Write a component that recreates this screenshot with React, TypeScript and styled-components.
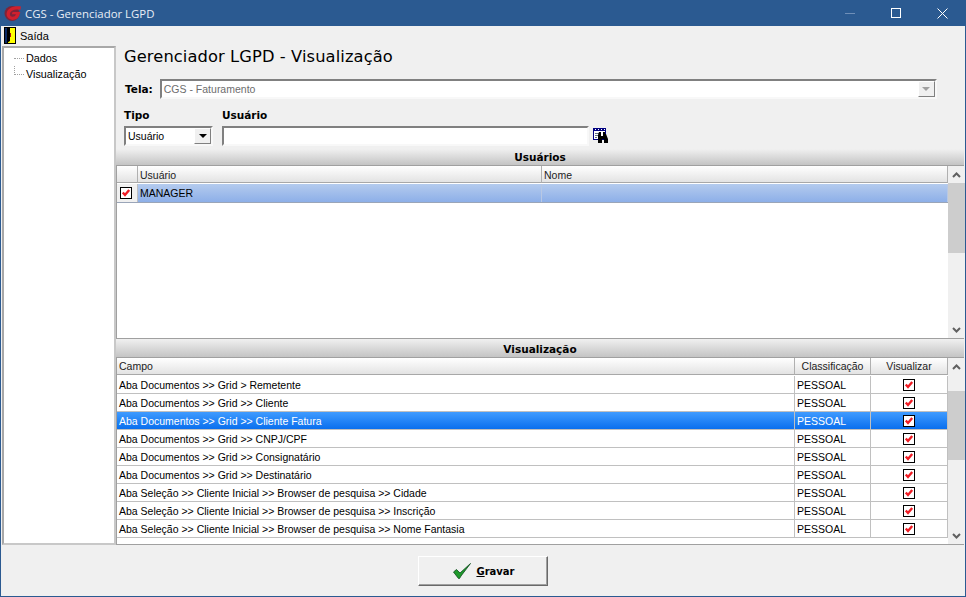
import React, {FC} from "react";
import styled, {createGlobalStyle} from "styled-components";

const GlobalStyle = createGlobalStyle`
  html, body {
    margin: 0;
    padding: 0;
    background: #f0f0f0;
  }
  * {
    box-sizing: border-box;
  }
`;

const Win = styled.div`
  width: 966px;
  height: 597px;
  display: flex;
  flex-direction: column;
  background: #f0f0f0;
  border-left: 1px solid #2b5a91;
  border-right: 1px solid #2b5a91;
  border-bottom: 1px solid #2b5a91;
  font-family: "DejaVu Sans", "Liberation Sans", sans-serif;
  font-size: 10px;
  color: #000;
  overflow: hidden;
`;

const TitleBar = styled.div`
  height: 26px;
  flex: none;
  background: #2b5a91;
  display: flex;
  align-items: center;
  padding-left: 3px;
  color: #e8eef6;
  font-family: "Open Sans", "Liberation Sans", sans-serif;
  font-size: 11.4px;
`;

const TitleText = styled.span`
  margin-left: 3px;
  flex: 1;
`;

const WinButton = styled.div`
  width: 46px;
  height: 26px;
  display: flex;
  align-items: center;
  justify-content: center;
`;

const MenuBar = styled.div`
  height: 19px;
  flex: none;
  display: flex;
  align-items: center;
  padding-left: 3px;
  gap: 4px;
  font-family: "Liberation Sans", sans-serif;
  font-size: 11px;
`;

const Body = styled.div`
  flex: 1;
  display: flex;
  min-height: 0;
  padding: 1px 1px 0 1px;
`;

const Tree = styled.div`
  width: 114px;
  flex: none;
  height: 499px;
  background: #fff;
  border: 2px solid;
  border-color: #a8a8a8 #c8c8c8 #c8c8c8 #a8a8a8;
  padding-top: 2px;
`;

const TreeItem = styled.div`
  height: 16px;
  display: flex;
  align-items: center;
  padding-left: 10px;
  font-family: "Liberation Sans", sans-serif;
  font-size: 10.8px;
`;

const TreeLine = styled.span<{$tall?: boolean}>`
  width: 10px;
  height: ${(p) => (p.$tall ? 9 : 1)}px;
  margin-top: ${(p) => (p.$tall ? -8 : 0)}px;
  margin-right: 2px;
  border-left: 1px dotted #a0a0a0;
  border-bottom: 1px dotted #a0a0a0;
`;

const Main = styled.div`
  flex: 1;
  min-width: 0;
  display: flex;
  flex-direction: column;
`;

const Heading = styled.div`
  height: 33px;
  padding: 1px 0 0 8px;
  font-family: "DejaVu Sans", sans-serif;
  font-size: 16.3px;
  line-height: 20px;
  letter-spacing: 0.1px;
`;

const TelaRow = styled.div`
  height: 20px;
  display: flex;
  align-items: center;
  padding-left: 9px;
  gap: 7px;
`;

const BoldLabel = styled.span`
  font-family: "DejaVu Sans", sans-serif;
  font-size: 10.5px;
  font-weight: bold;
`;

const Sunken = styled.div<{$w: number; $disabled?: boolean}>`
  width: ${(p) => p.$w}px;
  height: 20px;
  background: #fff;
  border: 2px solid;
  border-color: #808080 #f8f8f8 #f8f8f8 #808080;
  display: flex;
  align-items: center;
  padding-left: 2px;
  font-family: "Liberation Sans", sans-serif;
  font-size: 10.5px;
  color: ${(p) => (p.$disabled ? "#6d6d6d" : "#000")};
`;

const ComboText = styled.span`
  flex: 1;
`;

const ComboButton = styled.div`
  width: 17px;
  height: 16px;
  background: #f0f0f0;
  border: 1px solid;
  border-color: #fff #808080 #808080 #fff;
  display: flex;
  align-items: center;
  justify-content: center;
`;

const Arrow = styled.span<{$color: string}>`
  width: 0;
  height: 0;
  border-left: 4px solid transparent;
  border-right: 4px solid transparent;
  border-top: 4px solid ${(p) => p.$color};
`;

const FilterRow = styled.div`
  display: flex;
  padding: 10px 0 0 8px;
  height: 51px;
  gap: 9px;
`;

const Field = styled.div`
  display: flex;
  flex-direction: column;
  gap: 5px;
`;

const FieldLine = styled.div`
  display: flex;
  align-items: flex-start;
  gap: 4px;
`;

const SearchIcon = styled.svg`
  margin-top: 2px;
`;

const Band = styled.div<{$h: number}>`
  height: ${(p) => p.$h}px;
  flex: none;
  background: linear-gradient(#f0f0f0, #c4c4c4);
  display: flex;
  align-items: flex-end;
  justify-content: center;
  padding-bottom: 1px;
  font-family: "DejaVu Sans", sans-serif;
  font-size: 10.5px;
  font-weight: bold;
  line-height: 13px;
`;

const GridBox = styled.div<{$h: number}>`
  height: ${(p) => p.$h}px;
  flex: none;
  display: flex;
  border: 1px solid #a0a0a0;
  border-right: none;
  background: #fff;
`;

const GridBody = styled.div`
  width: 831px;
  flex: none;
  font-family: "Liberation Sans", sans-serif;
  font-size: 10.5px;
`;

const Row = styled.div<{$cols: string; $selected?: boolean; $plain?: boolean}>`
  display: grid;
  grid-template-columns: ${(p) => p.$cols};
  height: 18px;
  align-items: stretch;
  border-bottom: 1px solid ${(p) => (p.$plain ? "transparent" : "#c0c0c0")};
  background: ${(p) => (p.$selected ? "linear-gradient(#3f9bff, #0a6fee)" : "#fff")};
  color: ${(p) => (p.$selected ? "#fff" : "#000")};
`;

const HeaderCell = styled.div<{$center?: boolean}>`
  background: linear-gradient(#ffffff, #e3e3e3);
  border-right: 1px solid #b0b0b0;
  border-bottom: 1px solid #a8a8a8;
  display: flex;
  align-items: center;
  justify-content: ${(p) => (p.$center ? "center" : "flex-start")};
  padding-left: ${(p) => (p.$center ? 0 : 2)}px;
  color: #222;
`;

const UserHeaderCell = styled(HeaderCell)`
  padding-top: 2px;
`;

const Cell = styled.div<{$center?: boolean}>`
  display: flex;
  align-items: center;
  justify-content: ${(p) => (p.$center ? "center" : "flex-start")};
  padding-left: ${(p) => (p.$center ? 0 : 2)}px;
  border-right: 1px solid #c0c0c0;
  white-space: nowrap;
`;

const UserRow = styled.div`
  display: grid;
  grid-template-columns: 21px 404px 406px;
  height: 19px;
  background: linear-gradient(#b4cbee, #8dafe8);
  border-bottom: 1px solid #9aa5b8;
`;

const IndicatorCell = styled.div`
  background: #f0f0f0;
  display: flex;
  align-items: center;
  justify-content: center;
  padding-right: 2px;
  border-right: 1px solid #c0c0c0;
`;

const UserCell = styled.div`
  display: flex;
  align-items: center;
  padding-left: 2px;
  border-right: 1px solid #b8c8e4;
`;

const ScrollBar = styled.div`
  width: 17px;
  flex: none;
  background: #f0f0f0;
  display: flex;
  flex-direction: column;
`;

const ScrollEnd = styled.div`
  height: 17px;
  flex: none;
  display: flex;
  align-items: center;
  justify-content: center;
`;

const ScrollTrack = styled.div<{$offset: number}>`
  flex: 1;
  padding-top: ${(p) => p.$offset}px;
`;

const ScrollThumb = styled.div<{$h: number}>`
  height: ${(p) => p.$h}px;
  background: #cdcdcd;
`;

const Footer = styled.div`
  height: 51px;
  flex: none;
  display: flex;
  justify-content: center;
  padding-top: 11px;
`;

const SaveButton = styled.div`
  width: 130px;
  height: 30px;
  margin-left: -1px;
  padding-left: 3px;
  background: #f0f0f0;
  border: 1px solid;
  border-color: #fff #696969 #696969 #fff;
  box-shadow: inset -1px -1px 0 #a0a0a0;
  display: flex;
  align-items: center;
  justify-content: center;
  gap: 5px;
  font-family: "DejaVu Sans", sans-serif;
  font-size: 10px;
  font-weight: bold;
`;

const Underlined = styled.span`
  text-decoration: underline;
`;

const Check: FC = () => (
  <svg width="12" height="12" viewBox="0 0 12 12">
    <rect x="0.5" y="0.5" width="11" height="11" fill="#fff" stroke="#000" />
    <path d="M1 11.5 H11.5 V1" fill="none" stroke="#000" />
    <path d="M2.8 5.5 L5 8 L9.2 3" fill="none" stroke="#f01c24" strokeWidth="2.4" />
  </svg>
);

const Chevron: FC<{up?: boolean}> = ({up}) => (
  <svg width="9" height="6" viewBox="0 0 9 6">
    <path d={up ? "M1 5 L4.5 1.5 L8 5" : "M1 1 L4.5 4.5 L8 1"} fill="none" stroke="#606060" strokeWidth="2" />
  </svg>
);

const Logo: FC = () => (
  <svg width="18" height="18" viewBox="0 0 18 18">
    <circle cx="8" cy="9.5" r="7.5" fill="#7e2438" />
    <path
      d="M17 2.5 C10 1.4 3 4 2.6 9.6 C2.3 13.6 6 16.4 10 15.8 C12.6 15.4 14.2 13.8 15 12 L16.4 8 L8.6 8 L7.8 10.2 L12 10.2 C11.4 12 9.8 12.9 8.2 12.7 C6 12.4 5.4 10.6 6.2 8.8 C7.2 6.6 10 5.2 13.4 5.5 L16.4 5.8 Z"
      fill="#d0202e"
    />
  </svg>
);

const Door: FC = () => (
  <svg width="12" height="17" viewBox="0 0 12 17">
    <rect x="0" y="0" width="12" height="17" fill="#000" />
    <rect x="1" y="1" width="2" height="15" fill="#0a2a66" />
    <path d="M4 1 H11 V16 H4 Z" fill="#ffff00" />
    <path d="M3 1 L6 1 V14 L3 16 Z" fill="#000" />
    <rect x="6" y="6" width="1" height="4" fill="#b01010" />
  </svg>
);

const Binoculars: FC = () => (
  <SearchIcon width="16" height="16" viewBox="0 0 16 16">
    <rect x="0.5" y="0.5" width="12" height="11" fill="#fff" stroke="#000080" />
    <rect x="0" y="0" width="13" height="3" fill="#000080" />
    <path d="M2 1.5 H3 M5 1.5 H6 M8 1.5 H9 M11 1.5 H12" stroke="#fff" />
    <path d="M2 5.5 H7 M2 7.5 H5 M2 9.5 H4" stroke="#607080" />
    <path d="M6 4 H8 V8 H10 V4 H12 V6 H13 L15 11 V15 H11 V11 H9 V15 H5 V11 L5 7 Z" fill="#000" />
  </SearchIcon>
);

const fieldRows = [
  "Aba Documentos >> Grid > Remetente",
  "Aba Documentos >> Grid >> Cliente",
  "Aba Documentos >> Grid >> Cliente Fatura",
  "Aba Documentos >> Grid >> CNPJ/CPF",
  "Aba Documentos >> Grid >> Consignatário",
  "Aba Documentos >> Grid >> Destinatário",
  "Aba Seleção >> Cliente Inicial >> Browser de pesquisa >> Cidade",
  "Aba Seleção >> Cliente Inicial >> Browser de pesquisa >> Inscrição",
  "Aba Seleção >> Cliente Inicial >> Browser de pesquisa >> Nome Fantasia",
];

const lowerCols = "678px 76px 77px";

const App: FC = () => (
  <>
    <GlobalStyle />
    <Win>
      <TitleBar>
        <Logo />
        <TitleText>CGS - Gerenciador LGPD</TitleText>
        <WinButton>
          <svg width="10" height="10" viewBox="0 0 10 10">
            <path d="M0 5.5 H10" stroke="#6f8fb8" />
          </svg>
        </WinButton>
        <WinButton>
          <svg width="10" height="10" viewBox="0 0 10 10">
            <rect x="0.5" y="0.5" width="9" height="9" fill="none" stroke="#fff" />
          </svg>
        </WinButton>
        <WinButton>
          <svg width="11" height="11" viewBox="0 0 11 11">
            <path d="M0.5 0.5 L10.5 10.5 M10.5 0.5 L0.5 10.5" stroke="#fff" />
          </svg>
        </WinButton>
      </TitleBar>
      <MenuBar>
        <Door />
        <span>Saída</span>
      </MenuBar>
      <Body>
        <Tree>
          <TreeItem><TreeLine />Dados</TreeItem>
          <TreeItem><TreeLine $tall />Visualização</TreeItem>
        </Tree>
        <Main>
          <Heading>Gerenciador LGPD - Visualização</Heading>
          <TelaRow>
            <BoldLabel>Tela:</BoldLabel>
            <Sunken $w={777} $disabled>
              <ComboText>CGS - Faturamento</ComboText>
              <ComboButton><Arrow $color="#a0a0a0" /></ComboButton>
            </Sunken>
          </TelaRow>
          <FilterRow>
            <Field>
              <BoldLabel>Tipo</BoldLabel>
              <Sunken $w={89}>
                <ComboText>Usuário</ComboText>
                <ComboButton><Arrow $color="#000" /></ComboButton>
              </Sunken>
            </Field>
            <Field>
              <BoldLabel>Usuário</BoldLabel>
              <FieldLine>
                <Sunken $w={367} />
                <Binoculars />
              </FieldLine>
            </Field>
          </FilterRow>
          <Band $h={16}>Usuários</Band>
          <GridBox $h={174}>
            <GridBody>
              <Row $cols="21px 404px 406px" $plain>
                <UserHeaderCell />
                <UserHeaderCell>Usuário</UserHeaderCell>
                <UserHeaderCell>Nome</UserHeaderCell>
              </Row>
              <UserRow>
                <IndicatorCell><Check /></IndicatorCell>
                <UserCell>MANAGER</UserCell>
                <UserCell />
              </UserRow>
            </GridBody>
            <ScrollBar>
              <ScrollEnd><Chevron up /></ScrollEnd>
              <ScrollTrack $offset={0}><ScrollThumb $h={70} /></ScrollTrack>
              <ScrollEnd><Chevron /></ScrollEnd>
            </ScrollBar>
          </GridBox>
          <Band $h={18}>Visualização</Band>
          <GridBox $h={188}>
            <GridBody>
              <Row $cols={lowerCols} $plain>
                <HeaderCell>Campo</HeaderCell>
                <HeaderCell $center>Classificação</HeaderCell>
                <HeaderCell $center>Visualizar</HeaderCell>
              </Row>
              {fieldRows.map((field, i) => (
                <Row key={field} $cols={lowerCols} $selected={i === 2}>
                  <Cell>{field}</Cell>
                  <Cell>PESSOAL</Cell>
                  <Cell $center><Check /></Cell>
                </Row>
              ))}
            </GridBody>
            <ScrollBar>
              <ScrollEnd><Chevron up /></ScrollEnd>
              <ScrollTrack $offset={16}><ScrollThumb $h={69} /></ScrollTrack>
              <ScrollEnd><Chevron /></ScrollEnd>
            </ScrollBar>
          </GridBox>
        </Main>
      </Body>
      <Footer>
        <SaveButton>
          <svg width="18" height="16" viewBox="0 0 18 16">
            <path d="M0.5 9 L3.5 6.5 L7 10 L17.5 0.5 L8 13 L6.5 15.5 L5.5 15.5 Z" fill="#1f9a2c" stroke="#0a4a1a" strokeWidth="0.8" />
          </svg>
          <span><Underlined>G</Underlined>ravar</span>
        </SaveButton>
      </Footer>
    </Win>
  </>
);

export default App;
